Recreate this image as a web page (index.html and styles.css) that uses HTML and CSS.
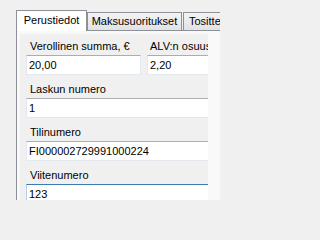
FILE: index.html
```html
<!DOCTYPE html>
<html>
<head>
<meta charset="utf-8">
<link rel="stylesheet" href="styles.css">
</head>
<body>
<div class="tabctl">
  <div class="tabs">
    <div class="tab sel">Perustiedot</div>
    <div class="tab t2">Maksusuoritukset</div>
    <div class="tab t3">Tositteet</div>
  </div>
  <div class="panel">
    <div class="page">
      <div class="row">
        <div class="group g1">
          <div class="label">Verollinen summa, €</div>
          <div class="input w1">20,00</div>
        </div>
        <div class="group g2">
          <div class="label l2">ALV:n osuus</div>
          <div class="input wide">2,20</div>
        </div>
      </div>
      <div class="group">
        <div class="label">Laskun numero</div>
        <div class="input wide">1</div>
      </div>
      <div class="group">
        <div class="label">Tilinumero</div>
        <div class="input wide">FI000002729991000224</div>
      </div>
      <div class="group">
        <div class="label">Viitenumero</div>
        <div class="input wide focus">123</div>
      </div>
    </div>
  </div>
</div>
</body>
</html>
```
FILE: styles.css
```css
html, body {
  margin: 0;
  padding: 0;
  background: #f0f0f0;
  width: 220px;
  height: 200px;
  overflow: hidden;
  font-family: "Liberation Sans", Arial, sans-serif;
  font-size: 11px;
  color: #000;
}

.tabctl {
  margin: 10px 0 0 16px;
  width: 260px;
}

.tabs {
  display: flex;
  align-items: flex-end;
  height: 20px;
  position: relative;
  z-index: 2;
}

.tab {
  box-sizing: border-box;
  height: 18px;
  border: 1px solid #8e9098;
  border-bottom: none;
  background: linear-gradient(#f3f3f3, #ebebeb 50%, #e2e2e2);
  line-height: 17px;
  text-align: center;
  white-space: nowrap;
  overflow: hidden;
}

.tab.sel {
  width: 71px;
  height: 21px;
  margin-bottom: -1px;
  background: #fff;
  line-height: 19px;
}

.tab.t2 {
  width: 95px;
}

.tab.t3 {
  width: 60px;
  margin-left: 1px;
  text-align: left;
  padding-left: 5px;
}

.panel {
  border-left: 1px solid #8e9098;
  border-top: 1px solid #8e9098;
  background: #f9f9f9;
  padding: 3px 0 0 3px;
  height: 200px;
}

.page {
  width: 188px;
  height: 200px;
  background: #f0f0f0;
  overflow: hidden;
  box-sizing: border-box;
  padding: 6px 0 0 6px;
  display: flex;
  flex-direction: column;
  gap: 8px;
}

.row {
  display: flex;
  gap: 6px;
}

.group {
  display: flex;
  flex-direction: column;
  gap: 2px;
}

.label {
  height: 13px;
  line-height: 13px;
  padding-left: 4px;
  white-space: nowrap;
}

.label.l2 {
  padding-left: 3px;
}

.input {
  box-sizing: border-box;
  height: 20px;
  background: #fff;
  border: 1px solid #e3e9ef;
  border-top-color: #abadb3;
  line-height: 18px;
  padding-left: 2px;
  white-space: nowrap;
}

.input.w1 {
  width: 115px;
}

.input.wide {
  width: 200px;
}

.input.focus {
  border-color: #b5cfe7;
  border-top-color: #3d7bad;
}
```
